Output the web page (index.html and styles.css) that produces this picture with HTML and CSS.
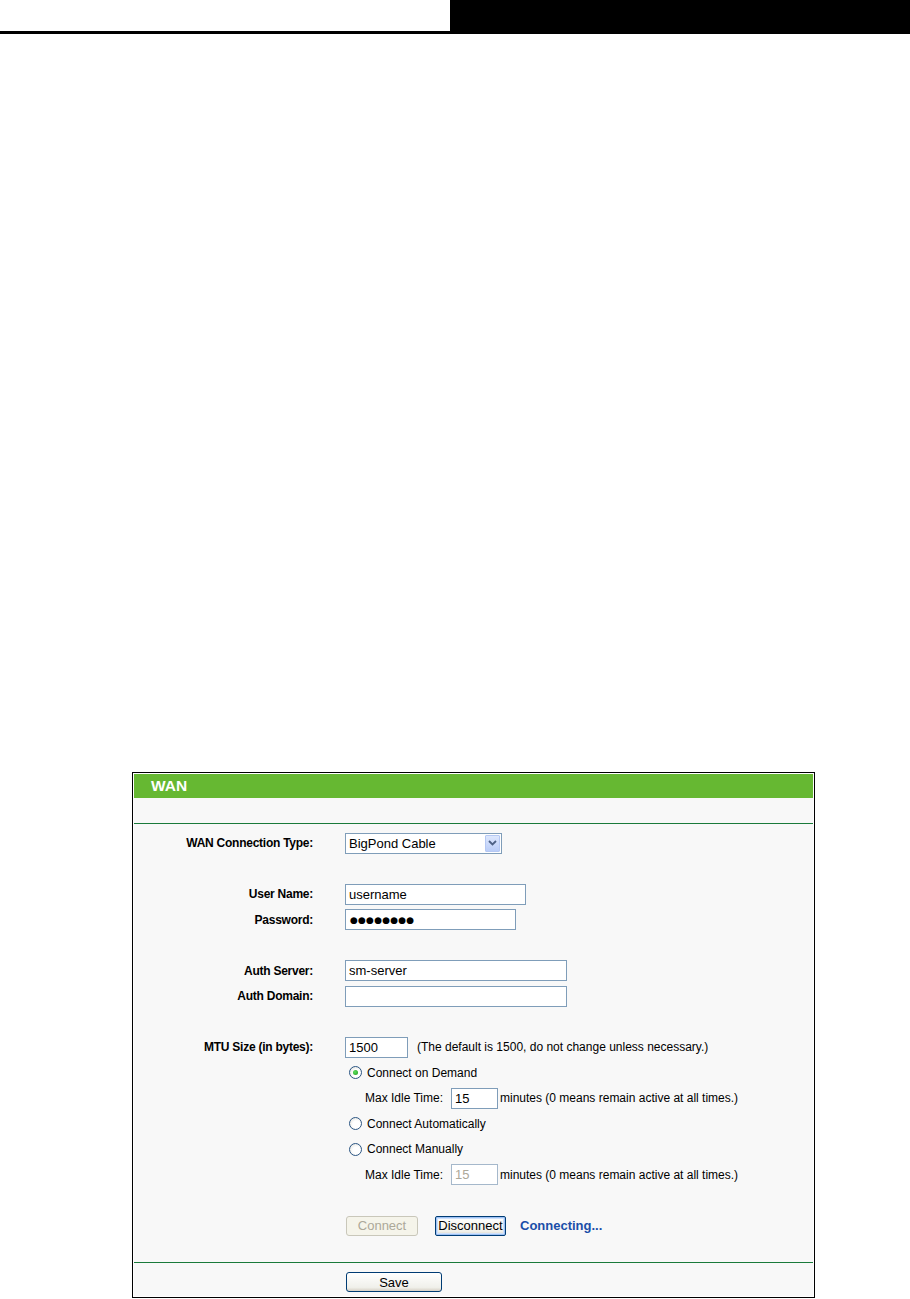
FILE: index.html
```html
<!DOCTYPE html>
<html>
<head>
<meta charset="utf-8">
<title>WAN</title>
<link rel="stylesheet" href="styles.css">
</head>
<body>
<div class="topbar">
  <div class="top-left"></div>
  <div class="top-right"></div>
</div>

<div class="panel">
  <div class="panel-title">WAN</div>
  <div class="band"></div>

  <div class="form">
    <div class="label">WAN Connection Type:</div>
    <div class="field">
      <div class="select">
        <span class="select-text">BigPond Cable</span>
        <span class="select-btn">
          <svg width="9" height="6" viewBox="0 0 9 6"><path d="M1 1 L4.5 4.5 L8 1" fill="none" stroke="#4d6185" stroke-width="1.8"/></svg>
        </span>
      </div>
    </div>

    <div class="empty"></div>

    <div class="label">User Name:</div>
    <div class="field"><input class="txt w-user" type="text" value="username"></div>

    <div class="label">Password:</div>
    <div class="field"><div class="txt w-pass pw">●●●●●●●●</div></div>

    <div class="empty"></div>

    <div class="label">Auth Server:</div>
    <div class="field"><input class="txt w-auth" type="text" value="sm-server"></div>

    <div class="label">Auth Domain:</div>
    <div class="field"><input class="txt w-auth" type="text" value=""></div>

    <div class="empty"></div>

    <div class="label">MTU Size (in bytes):</div>
    <div class="field">
      <input class="txt w-mtu" type="text" value="1500">
      <span class="note">(The default is 1500, do not change unless necessary.)</span>
    </div>

    <div class="field col2">
      <label class="opt"><input class="radio" type="radio" name="mode" checked><span>Connect on Demand</span></label>
    </div>

    <div class="field col2 indent">
      <span class="idle-label">Max Idle Time:</span>
      <input class="txt w-idle" type="text" value="15">
      <span class="minutes">minutes (0 means remain active at all times.)</span>
    </div>

    <div class="field col2">
      <label class="opt"><input class="radio" type="radio" name="mode"><span>Connect Automatically</span></label>
    </div>

    <div class="field col2">
      <label class="opt"><input class="radio" type="radio" name="mode"><span>Connect Manually</span></label>
    </div>

    <div class="field col2 indent">
      <span class="idle-label">Max Idle Time:</span>
      <input class="txt w-idle" type="text" value="15" disabled>
      <span class="minutes">minutes (0 means remain active at all times.)</span>
    </div>

    <div class="empty"></div>

    <div class="field col2 actions">
      <button class="btn btn-connect" disabled>Connect</button>
      <button class="btn btn-disconnect">Disconnect</button>
      <span class="status">Connecting...</span>
    </div>
  </div>

  <div class="save-row">
    <button class="btn btn-save">Save</button>
  </div>
</div>
</body>
</html>
```

FILE: styles.css
```css
html, body {
  margin: 0;
  padding: 0;
  background: #ffffff;
  font-family: "Liberation Sans", Arial, sans-serif;
  color: #000;
}

.topbar {
  display: flex;
  height: 31px;
  border-bottom: 3px solid #000;
}
.top-left {
  width: 450px;
  background: #fff;
}
.top-right {
  flex: 1;
  background: #000;
}

.panel {
  margin: 738px 0 0 132px;
  width: 683px;
  box-sizing: border-box;
  border: 1px solid #000;
  padding: 1px;
  background: #fff;
}

.panel-title {
  height: 24px;
  background: #66b832;
  color: #fff;
  font-weight: bold;
  font-size: 15.5px;
  line-height: 24px;
  padding-left: 17px;
}

.band {
  height: 25px;
  background: #f8f8f8;
  border-bottom: 1px solid #1a7a3a;
}

.form {
  background: #f8f8f8;
  display: grid;
  grid-template-columns: 179px 1fr;
  column-gap: 32px;
  grid-auto-rows: 25.5px;
  align-items: center;
  padding: 6.25px 0 23.75px 0;
  border-bottom: 1px solid #1a7a3a;
}

.label {
  text-align: right;
  font-weight: bold;
  font-size: 12px;
  letter-spacing: -0.25px;
  white-space: nowrap;
}

.field {
  display: flex;
  align-items: center;
  font-size: 12px;
  white-space: nowrap;
}

.col2 {
  grid-column: 2;
}

.empty {
  grid-column: 1 / span 2;
}

.txt {
  box-sizing: border-box;
  height: 21px;
  border: 1px solid #7f9db9;
  background: #fff;
  font-family: "Liberation Sans", Arial, sans-serif;
  font-size: 13px;
  color: #000;
  padding: 0 3px;
  margin: 0;
  outline: none;
}
.txt:disabled {
  color: #aca899;
  background: #fff;
  border-color: #a5b8cb;
}

.w-user { width: 181px; }
.w-pass { width: 171px; }
.w-auth { width: 222px; }
.w-mtu { width: 63px; }
.w-idle { width: 47px; }

.pw {
  display: flex;
  align-items: center;
  font-family: "DejaVu Sans", sans-serif;
  font-size: 9px;
  letter-spacing: 0.2px;
  padding-left: 4px;
}

.select {
  box-sizing: border-box;
  width: 157px;
  height: 21px;
  border: 1px solid #7f9db9;
  background: #fff;
  display: flex;
  align-items: center;
  justify-content: space-between;
  font-size: 13px;
  padding-left: 3px;
}
.select-btn {
  width: 15px;
  height: 17px;
  margin-right: 1px;
  box-sizing: border-box;
  border: 1px solid #b5c8f3;
  border-radius: 1px;
  background: linear-gradient(#dde7fd, #bacdf8);
  display: flex;
  align-items: center;
  justify-content: center;
}

.note {
  margin-left: 9px;
  font-size: 12px;
}

.opt {
  display: flex;
  align-items: center;
  font-size: 12px;
}

.radio {
  appearance: none;
  -webkit-appearance: none;
  width: 13px;
  height: 13px;
  margin: 0 5px 0 4px;
  border: 1px solid #2b5583;
  border-radius: 50%;
  background: radial-gradient(circle at 60% 60%, #ffffff 0%, #ffffff 40%, #dcdcd6 100%);
  box-sizing: border-box;
  position: relative;
}
.radio:checked::after {
  content: "";
  position: absolute;
  left: 3px;
  top: 3px;
  width: 5px;
  height: 5px;
  border-radius: 50%;
  background: radial-gradient(circle at 40% 40%, #5ee05e, #1b9a1b);
}

.indent {
  padding-left: 20px;
}
.idle-label {
  width: 86px;
}
.minutes {
  margin-left: 2px;
}

.actions {
  padding-left: 1px;
}

.btn {
  box-sizing: border-box;
  height: 20px;
  font-family: "Liberation Sans", Arial, sans-serif;
  font-size: 13px;
  padding: 0;
  margin: 0;
  border-radius: 3px;
  color: #000;
  cursor: default;
}
.btn-connect {
  width: 72px;
  border: 1px solid #c9c7ba;
  background: #f5f4ea;
  color: #aca899;
}
.btn-disconnect {
  width: 71px;
  margin-left: 17px;
  border: 1px solid #003c74;
  background: linear-gradient(#ffffff, #f0f0ea 80%, #d6d0c5);
  box-shadow: inset 0 0 0 1px #9ec2f5, inset 0 0 0 2px #cfe1fb;
  border-radius: 2px;
}
.btn-save {
  width: 96px;
  border: 1px solid #003c74;
  background: linear-gradient(#ffffff, #f0f0ea 80%, #d6d0c5);
}

.status {
  margin-left: 14px;
  font-weight: bold;
  font-size: 13px;
  color: #1a4ea8;
}

.save-row {
  background: #f8f8f8;
  display: flex;
  padding: 9px 0 4px 212px;
}
```
